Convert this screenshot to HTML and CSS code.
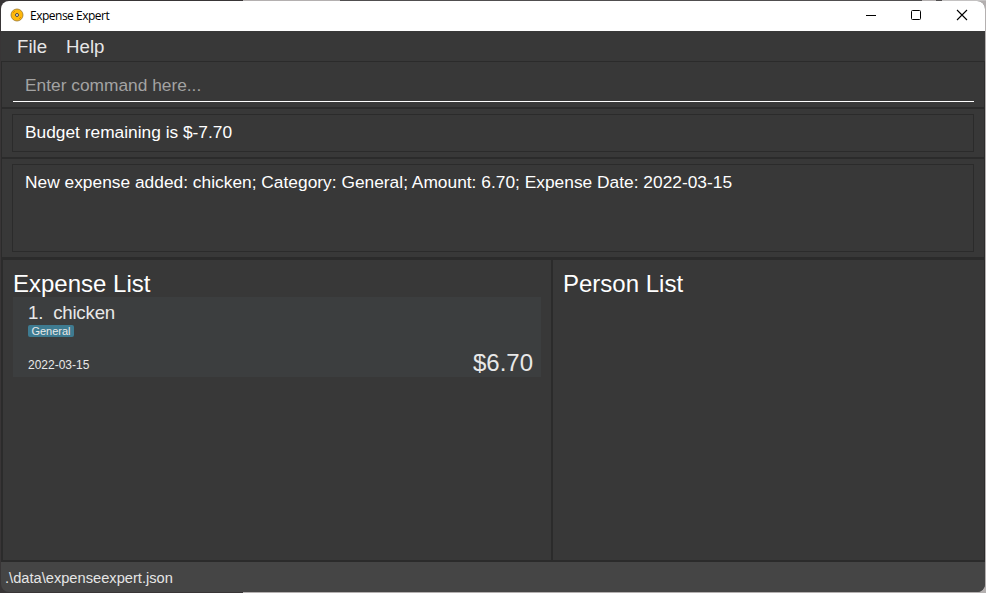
FILE: index.html
```html
<!DOCTYPE html>
<html lang="en">
<head>
<meta charset="utf-8">
<title>Expense Expert</title>
<link rel="stylesheet" href="styles.css">
</head>
<body>
<div class="window">
  <header class="titlebar">
    <svg class="logo" width="14" height="14" viewBox="0 0 14 14"><circle cx="7" cy="7" r="6" fill="#ffb90b" stroke="#9c7930" stroke-width=".8"/><path d="M3 5l2-2M9 11l2-2" stroke="#e58b00" stroke-width="1"/><circle cx="7" cy="7" r="1.5" fill="#e8edf0" stroke="#4c4540" stroke-width="1"/></svg>
    <span class="app-name">Expense Expert</span>
    <svg class="controls" width="104" height="12" viewBox="0 0 104 12" fill="none" stroke="#000"><path d="M1 6.5h10"/><rect x="46.5" y="1.5" width="9" height="9" rx="1"/><path d="M92 1l10 10M102 1L92 11" stroke-width="1.1"/></svg>
  </header>
  <nav class="menu"><span>File</span><span>Help</span></nav>
  <section class="pane command"><div class="command-field">Enter command here...</div></section>
  <section class="pane budget"><div class="box"><span class="budget-text">Budget remaining is $-7.70</span></div></section>
  <section class="pane result"><div class="box"><span class="result-text">New expense added: chicken; Category: General; Amount: 6.70; Expense Date: 2022-03-15</span></div></section>
  <main class="lists">
    <section class="list expenses">
      <h2>Expense List</h2>
      <article class="card">
        <div class="details">
          <div class="name">1.&nbsp; chicken</div>
          <span class="tag">General</span>
          <div class="date">2022-03-15</div>
        </div>
        <div class="amount">$6.70</div>
      </article>
    </section>
    <section class="list persons"><h2>Person List</h2></section>
  </main>
  <footer class="status">.\data\expenseexpert.json</footer>
</div>
</body>
</html>
```
FILE: styles.css
```css
* { box-sizing: border-box; }
body {
  margin: 0;
  width: 986px;
  height: 593px;
  padding: 1px;
  overflow: hidden;
  background:
    linear-gradient(to right, #383536 243px, #b4b0b0 243px 340px, #504e4f 340px 922px, #b4b0b0 922px 936px, #504e4f 936px 942px, #c4c2c2 942px) top / 100% 1px no-repeat,
    linear-gradient(to right, #383536 243px, #b4b0b0 243px);
  font-family: "Liberation Sans", Arial, sans-serif;
  color: #fff;
}
.window {
  width: 984px;
  height: 591px;
  display: flex;
  flex-direction: column;
  overflow: hidden;
  border-radius: 8px;
  background: #383838;
}
.titlebar {
  height: 30px;
  flex: none;
  display: flex;
  align-items: center;
  padding: 0 16px 2px 9px;
  background: #fff;
  color: #000;
}
.app-name {
  margin-left: 6px;
  font: 12px/16px "Open Sans", sans-serif;
  letter-spacing: -0.5px;
  padding-top: 2px;
}
.controls { margin-left: auto; }
.menu {
  height: 30px;
  flex: none;
  display: flex;
  gap: 19px;
  padding-left: 16px;
  font-size: 18.67px;
  line-height: 31px;
  color: #e6e6e6;
}
.pane {
  flex: none;
  border: 1px solid #2b2b2b;
  padding: 5px 10px;
}
.command { height: 47px; padding: 0 10px 5px 11px; }
.command-field {
  height: 40px;
  padding-left: 12px;
  border-bottom: 1px solid #fff;
  font-size: 17.33px;
  line-height: 47px;
  color: #a3a3a3;
}
.budget { height: 50px; }
.result { height: 100px; }
.result-text { letter-spacing: 0.012px; }
.box {
  height: 100%;
  padding: 7px 12px;
  border: 1px solid #2b2b2b;
  font-size: 17.33px;
  line-height: 20px;
  white-space: nowrap;
}
.lists {
  height: 304px;
  flex: none;
  display: flex;
  border: solid #2b2b2b;
  border-width: 2px 1px 2px 2px;
}
.list { padding: 10px; }
.expenses { width: 548px; }
.persons {
  flex: 1;
  border-left: 2px solid #2b2b2b;
}
h2 {
  margin: 0;
  height: 27px;
  font-size: 24px;
  line-height: 28px;
  font-weight: 400;
}
.card {
  width: 528px;
  height: 80px;
  display: flex;
  justify-content: space-between;
  align-items: flex-end;
  padding: 5px 8px 0 15px;
  background: #3c3e3f;
  color: #e8e8e8;
}
.details { align-self: flex-start; }
.name {
  height: 23px;
  font-size: 18.67px;
  line-height: 21px;
  letter-spacing: -0.2px;
}
.tag {
  display: block;
  width: 46px;
  height: 12px;
  border-radius: 2px;
  background: #3e7b91;
  font-size: 11px;
  line-height: 12px;
  text-align: center;
}
.date { margin-top: 20px; font-size: 12px; line-height: 16px; }
.amount { font-size: 24px; line-height: 28px; }
.status {
  flex: 1;
  padding-left: 4px;
  background: #454545;
  font-size: 14.67px;
  line-height: 33px;
  color: #e6e6e6;
}
```
